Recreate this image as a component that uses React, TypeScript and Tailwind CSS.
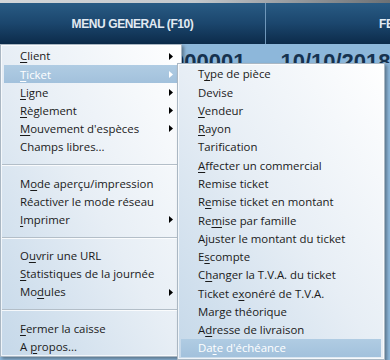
import React from "react";

type Item = { label: string; u?: number; arrow?: boolean; hl?: boolean } | "sep";

const mainItems: Item[] = [
  { label: "Client", u: 0, arrow: true },
  { label: "Ticket", u: 0, arrow: true, hl: true },
  { label: "Ligne", u: 0, arrow: true },
  { label: "Règlement", u: 0, arrow: true },
  { label: "Mouvement d'espèces", u: 0, arrow: true },
  { label: "Champs libres..." },
  "sep",
  { label: "Mode aperçu/impression", u: 1 },
  { label: "Réactiver le mode réseau" },
  { label: "Imprimer", u: 0, arrow: true },
  "sep",
  { label: "Ouvrir une URL", u: 1 },
  { label: "Statistiques de la journée", u: 0 },
  { label: "Modules", u: 2, arrow: true },
  "sep",
  { label: "Fermer la caisse", u: 0 },
  { label: "A propos...", u: 2 },
];

const subItems: Item[] = [
  { label: "Type de pièce", u: 1 },
  { label: "Devise" },
  { label: "Vendeur", u: 0 },
  { label: "Rayon", u: 0 },
  { label: "Tarification" },
  { label: "Affecter un commercial", u: 0 },
  { label: "Remise ticket" },
  { label: "Remise ticket en montant", u: 1 },
  { label: "Remise par famille", u: 2 },
  { label: "Ajuster le montant du ticket" },
  { label: "Escompte", u: 1 },
  { label: "Changer la T.V.A. du ticket", u: 1 },
  { label: "Ticket exonéré de T.V.A.", u: 8 },
  { label: "Marge théorique" },
  { label: "Adresse de livraison", u: 1 },
  { label: "Date d'échéance", u: 2, hl: true },
];

function Label({ label, u }: { label: string; u?: number }) {
  if (u === undefined) return <span>{label}</span>;
  return (
    <span>
      {label.slice(0, u)}
      <span className="underline underline-offset-[2px] decoration-1">{label[u]}</span>
      {label.slice(u + 1)}
    </span>
  );
}

function Arrow({ white }: { white?: boolean }) {
  return (
    <svg width="4" height="7" viewBox="0 0 4 7" className="shrink-0">
      <polygon points="0,0 4,3.5 0,7" fill={white ? "#ffffff" : "#000000"} />
    </svg>
  );
}

function Row({ item, h, pl }: { item: Exclude<Item, "sep">; h: string; pl: string }) {
  return (
    <div
      className={`flex items-center ${h} ${pl} pr-[5px] mx-[2px] ${
        item.hl ? "bg-linear-to-b from-[#b0cce3] to-[#a2c1dc] text-white" : "text-[#1a1a1a]"
      }`}
    >
      <div className="flex-1 whitespace-nowrap leading-none">
        <Label label={item.label} u={item.u} />
      </div>
      {item.arrow && <Arrow white={item.hl} />}
    </div>
  );
}

export default function App() {
  return (
    <div
      className="relative w-[390px] h-[360px] overflow-hidden bg-[#8db7da]"
      style={{ fontFamily: '"Open Sans", "Noto Sans", sans-serif' }}
    >
      <div className="h-[3px] bg-linear-to-r from-[#d3d6d9] via-[#c4c8cc] to-[#6d7175]" />
      <div
        className="flex h-[41px] bg-linear-to-b from-[#295b84] via-[#1b466d] to-[#0c2b4a] text-[#e2eaf2] text-[12px] font-bold tracking-[-0.4px] overflow-hidden"
        style={{ fontFamily: '"Liberation Sans", Arial, sans-serif' }}
      >
        <div className="w-[266px] shrink-0 flex items-center justify-center border-r border-[#6f97ba]">
          MENU GENERAL (F10)
        </div>
        <div className="flex-1 flex items-center pl-[113px] whitespace-nowrap">FEUILLE</div>
      </div>
      <div
        className="h-[19px] overflow-hidden flex items-start pt-[7px] pl-[172px] gap-[35px] text-[22px] font-bold text-[#16324f] leading-none whitespace-nowrap"
        style={{ fontFamily: '"Liberation Sans", Arial, sans-serif' }}
      >
        <span>000001</span>
        <span>10/10/2018</span>
      </div>

      {/* Main menu */}
      <div className="absolute left-0 top-[44px] w-[182px] h-[313px] border border-[#aab7c3] shadow-[2px_2px_3px_rgba(0,0,0,0.35)] bg-linear-to-bl from-[#ffffff] via-[#e7eef5] to-[#c5d8e9] text-[11.4px]">
        <div className="h-full border border-white/70 py-[1px]">
          {mainItems.map((it, i) =>
            it === "sep" ? (
              <div key={i} className="h-[18px] flex items-center">
                <div className="w-full h-[2px] border-t border-[#b3bec8] border-b border-b-white/80" />
              </div>
            ) : (
              <Row key={i} item={it} h="h-[18.2px]" pl="pl-[16px]" />
            )
          )}
        </div>
      </div>

      {/* Sub menu */}
      <div className="absolute left-[177px] top-[63px] w-[208px] h-[297px] border border-[#aab7c3] shadow-[2px_2px_3px_rgba(0,0,0,0.35)] bg-linear-to-bl from-[#ffffff] via-[#e7eef5] to-[#c5d8e9] text-[11.4px]">
        <div className="h-full border border-white/70">
          {subItems.map((it, i) =>
            it === "sep" ? null : <Row key={i} item={it} h="h-[18.27px]" pl="pl-[17px]" />
          )}
        </div>
      </div>
    </div>
  );
}
